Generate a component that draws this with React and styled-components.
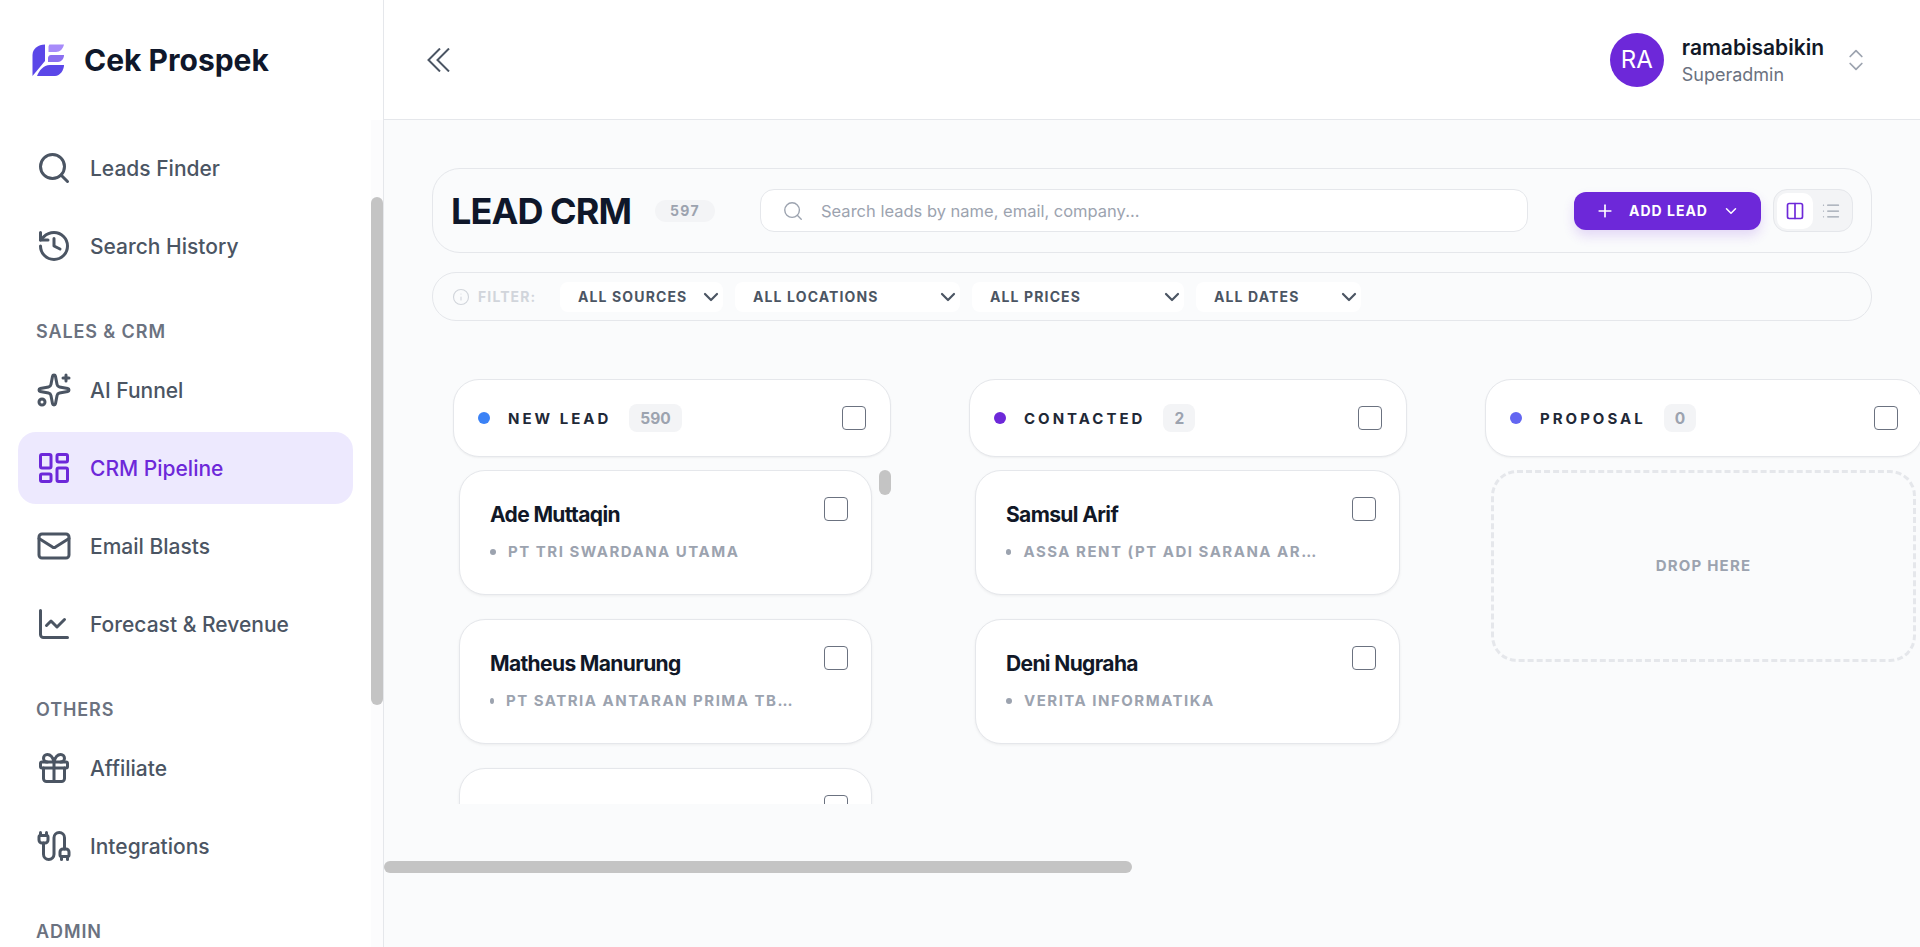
import React, { useLayoutEffect, useRef } from "react";
import styled, { createGlobalStyle } from "styled-components";
import {
  Search,
  History,
  Sparkles,
  LayoutDashboard,
  Mail,
  ChartLine,
  Gift,
  Cable,
  Users,
  Package,
  Settings,
  CreditCard,
  Shield,
  Compass,
  ChevronsUpDown,
  ChevronDown,
  Plus,
  Columns2,
  List,
  Info,
} from "lucide-react";

const GlobalStyle = createGlobalStyle`
  * { box-sizing: border-box; }
  html, body { margin: 0; height: 100%; overflow: hidden; }
  body {
    font-family: Inter, "Noto Sans", sans-serif;
    background: #fafbfc;
    color: #111827;
  }
`;

const Page = styled.div`
  display: flex;
  width: 1920px;
  height: 947px;
  overflow: hidden;
`;

const Sidebar = styled.aside`
  width: 384px;
  flex: none;
  display: flex;
  flex-direction: column;
  background: #fff;
  border-right: 1px solid #e5e7eb;
`;

const Brand = styled.div`
  height: 120px;
  flex: none;
  display: flex;
  align-items: center;
  gap: 20px;
  padding-left: 32px;
`;

const BrandName = styled.span`
  font-size: 30px;
  font-weight: 700;
  color: #0f172a;
`;

const NavWrap = styled.div`
  position: relative;
  flex: 1;
  min-height: 0;
`;

const NavScroll = styled.nav`
  height: 100%;
  overflow-y: scroll;
  padding: 6px 30px 60px 18px;
`;

/* the browser hides real scrollbars in this shot, so the bars are drawn over the content */
const NavTrack = styled.div`
  position: absolute;
  top: 0;
  right: 0;
  bottom: 0;
  width: 12px;
  background: #fcfcfd;
`;

const Thumb = styled.div`
  position: absolute;
  background: #c4c4c4;
  border-radius: 6px;
`;

const NavThumb = styled(Thumb)`
  top: 77px;
  left: 0;
  width: 12px;
  height: 508px;
`;

const NavGroup = styled.div`
  display: flex;
  flex-direction: column;
  gap: 6px;
  margin-bottom: 38px;
`;

const GroupLabel = styled.div`
  height: 24px;
  line-height: 24px;
  padding-left: 18px;
  margin-bottom: 4px;
  font-size: 18px;
  font-weight: 600;
  letter-spacing: 0.05em;
  color: #6b7280;
`;

const NavItem = styled.a`
  height: 72px;
  display: flex;
  align-items: center;
  gap: 18px;
  padding-left: 18px;
  border-radius: 18px;
  font-size: 21px;
  font-weight: 500;
  color: ${(p) => (p.$active ? "#6d28d9" : "#4b5563")};
  background: ${(p) => (p.$active ? "#ede9fe" : "transparent")};

  svg { flex: none; }
`;

const Main = styled.main`
  flex: 1;
  min-width: 0;
  display: flex;
  flex-direction: column;
`;

const TopBar = styled.header`
  height: 120px;
  flex: none;
  display: flex;
  align-items: center;
  justify-content: space-between;
  padding: 0 50px 0 43px;
  background: #fff;
  border-bottom: 1px solid #e5e7eb;
`;

const UserBox = styled.div`
  display: flex;
  align-items: center;
  gap: 18px;
`;

const Avatar = styled.div`
  width: 54px;
  height: 54px;
  border-radius: 50%;
  display: flex;
  align-items: center;
  justify-content: center;
  background: #6d28d9;
  color: #fff;
  font-size: 24px;
`;

const UserText = styled.div`
  display: flex;
  flex-direction: column;
  gap: 4px;
`;

const UserName = styled.span`
  font-size: 21px;
  font-weight: 600;
  color: #111827;
`;

const UserRole = styled.span`
  font-size: 18px;
  color: #6b7280;
`;

const Toolbars = styled.div`
  padding: 48px 48px 0;
  display: flex;
  flex-direction: column;
  gap: 19px;
`;

const TitleBar = styled.div`
  height: 85px;
  display: flex;
  align-items: center;
  padding: 0 18px;
  border: 1px solid #e5e7eb;
  border-radius: 28px;
`;

const Title = styled.h1`
  margin: 0;
  width: 180px;
  flex: none;
  white-space: nowrap;
  font-size: 36px;
  font-weight: 700;
  letter-spacing: -0.025em;
  color: #0f172a;
`;

const TotalBadge = styled.span`
  margin-left: 24px;
  width: 60px;
  height: 22px;
  flex: none;
  display: flex;
  align-items: center;
  justify-content: center;
  border-radius: 11px;
  background: #f3f4f6;
  font-size: 14px;
  font-weight: 700;
  letter-spacing: 0.1em;
  color: #9ca3af;
`;

const SearchBox = styled.label`
  width: 768px;
  height: 43px;
  margin-left: 45px;
  flex: none;
  display: flex;
  align-items: center;
  gap: 15px;
  padding-left: 21px;
  background: #fff;
  border: 1px solid #e5e7eb;
  border-radius: 14px;
  color: #9ca3af;
`;

const SearchInput = styled.input`
  flex: 1;
  border: 0;
  outline: 0;
  background: transparent;
  font: 400 16.5px Inter, sans-serif;
  color: #111827;

  &::placeholder { color: #9ca3af; }
`;

const AddButton = styled.button`
  width: 187px;
  height: 38px;
  margin-left: 46px;
  flex: none;
  display: flex;
  align-items: center;
  justify-content: center;
  gap: 14px;
  border: 0;
  border-radius: 12px;
  background: #6d28d9;
  box-shadow: 0 6px 12px rgba(109, 40, 217, 0.16);
  color: #fff;
  font: 700 14px Inter, sans-serif;
  letter-spacing: 0.07em;
`;

const ViewToggle = styled.div`
  width: 80px;
  height: 43px;
  margin-left: 12px;
  flex: none;
  display: flex;
  align-items: center;
  padding: 3px;
  background: #f3f4f6;
  border: 1px solid #e5e7eb;
  border-radius: 14px;
`;

const ViewOption = styled.span`
  width: 36px;
  height: 36px;
  display: flex;
  align-items: center;
  justify-content: center;
  border-radius: 10px;
  background: ${(p) => (p.$active ? "#fff" : "transparent")};
  color: ${(p) => (p.$active ? "#6d28d9" : "#9ca3af")};
`;

const FilterBar = styled.div`
  height: 49px;
  display: flex;
  align-items: center;
  padding-left: 19px;
  border: 1px solid #e5e7eb;
  border-radius: 24px;
`;

const FilterLabel = styled.span`
  display: flex;
  align-items: center;
  gap: 8px;
  width: 108px;
  flex: none;
  font-size: 14px;
  font-weight: 700;
  letter-spacing: 0.08em;
  color: #d1d5db;
`;

const FilterSelect = styled.div`
  width: ${(p) => p.$w}px;
  height: 30px;
  flex: none;
  margin-right: 12px;
  display: flex;
  align-items: center;
  justify-content: space-between;
  padding-left: 18px;
  background: #fff;
  border-radius: 8px;
  font-size: 14px;
  font-weight: 700;
  letter-spacing: 0.08em;
  color: #4b5563;
`;

const BoardWrap = styled.div`
  position: relative;
  height: 552px;
  margin-bottom: 74px;
  flex: none;
`;

const Board = styled.div`
  height: 100%;
  display: flex;
  gap: 78px;
  padding: 58px 67px 0 69px;
  overflow-x: scroll;
  overflow-y: hidden;
`;

const BoardThumb = styled(Thumb)`
  left: 0;
  bottom: 0;
  width: 748px;
  height: 12px;
`;

const Column = styled.section`
  position: relative;
  width: 438px;
  height: 425px;
  flex: none;
  display: flex;
  flex-direction: column;
`;

const ColumnHead = styled.div`
  height: 78px;
  flex: none;
  display: flex;
  align-items: center;
  padding: 0 24px;
  background: #fff;
  border: 1px solid #e5e7eb;
  border-radius: 26px;
  box-shadow: 0 1px 2px rgba(0, 0, 0, 0.05);
`;

const Dot = styled.span`
  width: 12px;
  height: 12px;
  flex: none;
  border-radius: 50%;
  background: ${(p) => p.$color};
`;

const StageName = styled.span`
  margin-left: 18px;
  font-size: 15px;
  font-weight: 700;
  letter-spacing: 0.2em;
  color: #1f2937;
`;

const StageCount = styled.span`
  margin-left: 18px;
  height: 28px;
  padding: 0 11px;
  display: flex;
  align-items: center;
  border-radius: 8px;
  background: #f3f4f6;
  font-size: 15.5px;
  font-weight: 700;
  color: #9ca3af;
`;

const Check = styled.span`
  width: 24px;
  height: 24px;
  flex: none;
  display: block;
  background: #fff;
  border: 1.5px solid #6b7280;
  border-radius: 4px;
`;

const HeadCheck = styled(Check)`
  margin-left: auto;
`;

const CardList = styled.div`
  flex: 1;
  min-height: 0;
  margin-top: 13px;
  display: flex;
  flex-direction: column;
  gap: 24px;
  padding: 0 ${(p) => (p.$scrolling ? 19 : 7)}px 0 6px;
  overflow-y: scroll;
`;

const ListThumb = styled(Thumb)`
  top: 91px;
  right: 0;
  width: 12px;
  height: 25px;
`;

const Card = styled.article`
  height: 125px;
  flex: none;
  display: flex;
  justify-content: space-between;
  gap: 12px;
  padding: 26px 23px 0 30px;
  background: #fff;
  border: 1px solid #e5e7eb;
  border-radius: 26px;
  box-shadow: 0 1px 3px rgba(0, 0, 0, 0.06);
`;

const CardText = styled.div`
  min-width: 0;
  flex: 1;
  margin-top: 4px;
  display: flex;
  flex-direction: column;
  gap: 14px;
`;

const LeadName = styled.div`
  font-size: 21px;
  line-height: 27px;
  font-weight: 700;
  letter-spacing: -0.03em;
  color: #111827;
`;

const Company = styled.div`
  display: flex;
  align-items: center;
  gap: 12px;
  padding-right: 9px;
  font-size: 15px;
  font-weight: 700;
  letter-spacing: 0.1em;
  color: #9ca3af;

  &::before {
    content: "";
    width: 6px;
    height: 6px;
    border-radius: 50%;
    background: #9ca3af;
    flex-shrink: 1;
  }
`;

const CompanyText = styled.span`
  overflow: hidden;
  white-space: nowrap;
  text-overflow: ellipsis;
`;

const DropZone = styled.div`
  height: 192px;
  flex: none;
  display: flex;
  align-items: center;
  justify-content: center;
  padding-bottom: 2px;
  border: 3px dashed #e5e7eb;
  border-radius: 26px;
  font-size: 15px;
  font-weight: 700;
  letter-spacing: 0.08em;
  color: #9ca3af;
`;

const Logo = () => (
  <svg width="32" height="32" viewBox="0 0 32 32" aria-hidden="true">
    <path d="M13 .5V17L.5 32V11C.5 5 6 .5 13 .5Z" fill="#5b47e8" />
    <path d="M5 32H23C28 32 32 26 32 21H18C11 21 7 27 5 32Z" fill="#5b47e8" />
    <path d="M17.5.5H32C31 5 28 8 24 8H16.5V3C16.5 2 17 .8 17.5.5Z" fill="#a78bfa" />
    <path d="M16 18H26C29 18 32 15 32 11H19C17 11 16 12.5 16 14Z" fill="#8b6ff0" />
  </svg>
);

const CollapseIcon = () => (
  <svg width="24" height="24" viewBox="0 0 24 24" fill="none" stroke="#4b5563" strokeWidth="2" aria-hidden="true">
    <path d="M13 .5 1.5 12 13 23.5" />
    <path d="M22 .5 10.5 12 22 23.5" />
  </svg>
);

const navGroups = [
  {
    label: "MAIN",
    items: [{ label: "Dashboard", icon: Compass }],
  },
  {
    items: [
      { label: "Leads Finder", icon: Search },
      { label: "Search History", icon: History },
    ],
  },
  {
    label: "SALES & CRM",
    items: [
      { label: "AI Funnel", icon: Sparkles },
      { label: "CRM Pipeline", icon: LayoutDashboard, active: true },
      { label: "Email Blasts", icon: Mail },
      { label: "Forecast & Revenue", icon: ChartLine },
    ],
  },
  {
    label: "OTHERS",
    items: [
      { label: "Affiliate", icon: Gift },
      { label: "Integrations", icon: Cable },
    ],
  },
  {
    label: "ADMIN",
    items: [
      { label: "Users", icon: Users },
      { label: "Packages", icon: Package },
      { label: "Billing", icon: CreditCard },
      { label: "Roles", icon: Shield },
      { label: "Settings", icon: Settings },
    ],
  },
];

const filters = [
  { label: "ALL SOURCES", w: 163 },
  { label: "ALL LOCATIONS", w: 225 },
  { label: "ALL PRICES", w: 212 },
  { label: "ALL DATES", w: 165 },
];

const moreLeads = Array.from({ length: 27 }, (_, i) => ({
  name: `Lead ${i + 3}`,
  company: "PT NUSANTARA",
}));

const stages = [
  {
    name: "NEW LEAD",
    color: "#3b82f6",
    count: 590,
    leads: [
      { name: "Ade Muttaqin", company: "PT TRI SWARDANA UTAMA" },
      { name: "Matheus Manurung", company: "PT SATRIA ANTARAN PRIMA TBK CABANG JAKARTA" },
      ...moreLeads,
    ],
  },
  {
    name: "CONTACTED",
    color: "#6d28d9",
    count: 2,
    leads: [
      { name: "Samsul Arif", company: "ASSA RENT (PT ADI SARANA ARMADA)" },
      { name: "Deni Nugraha", company: "VERITA INFORMATIKA" },
    ],
  },
  { name: "PROPOSAL", color: "#6366f1", count: 0, leads: [] },
  { name: "NEGOTIATION", color: "#f59e0b", count: 0, leads: [] },
  { name: "WON", color: "#10b981", count: 5, leads: [] },
  { name: "LOST", color: "#ef4444", count: 0, leads: [] },
];

export default function App() {
  const navRef = useRef(null);

  useLayoutEffect(() => {
    // sidebar sits scrolled down past the first group
    navRef.current.scrollTop = 138;
  }, []);

  return (
    <Page>
      <GlobalStyle />
      <Sidebar>
        <Brand>
          <Logo />
          <BrandName>Cek Prospek</BrandName>
        </Brand>
        <NavWrap>
          <NavScroll ref={navRef}>
            {navGroups.map((group, i) => (
              <NavGroup key={i}>
                {group.label && <GroupLabel>{group.label}</GroupLabel>}
                {group.items.map((item) => (
                  <NavItem key={item.label} $active={item.active}>
                    <item.icon size={36} strokeWidth={2} />
                    {item.label}
                  </NavItem>
                ))}
              </NavGroup>
            ))}
          </NavScroll>
          <NavTrack>
            <NavThumb />
          </NavTrack>
        </NavWrap>
      </Sidebar>
      <Main>
        <TopBar>
          <CollapseIcon />
          <UserBox>
            <Avatar>RA</Avatar>
            <UserText>
              <UserName>ramabisabikin</UserName>
              <UserRole>Superadmin</UserRole>
            </UserText>
            <ChevronsUpDown size={28} strokeWidth={1.5} color="#9ca3af" />
          </UserBox>
        </TopBar>
        <Toolbars>
          <TitleBar>
            <Title>LEAD CRM</Title>
            <TotalBadge>597</TotalBadge>
            <SearchBox>
              <Search size={22} strokeWidth={1.5} />
              <SearchInput placeholder="Search leads by name, email, company..." />
            </SearchBox>
            <AddButton>
              <Plus size={20} />
              ADD LEAD
              <ChevronDown size={18} />
            </AddButton>
            <ViewToggle>
              <ViewOption $active>
                <Columns2 size={20} strokeWidth={2} />
              </ViewOption>
              <ViewOption>
                <List size={20} strokeWidth={1.5} />
              </ViewOption>
            </ViewToggle>
          </TitleBar>
          <FilterBar>
            <FilterLabel>
              <Info size={18} strokeWidth={1.5} />
              FILTER:
            </FilterLabel>
            {filters.map((f) => (
              <FilterSelect key={f.label} $w={f.w}>
                {f.label}
                <ChevronDown size={24} strokeWidth={2.2} />
              </FilterSelect>
            ))}
          </FilterBar>
        </Toolbars>
        <BoardWrap>
          <Board>
            {stages.map((stage) => (
              <Column key={stage.name}>
                <ColumnHead>
                  <Dot $color={stage.color} />
                  <StageName>{stage.name}</StageName>
                  <StageCount>{stage.count}</StageCount>
                  <HeadCheck />
                </ColumnHead>
                <CardList $scrolling={stage.leads.length > 2}>
                  {stage.leads.length === 0 && <DropZone>DROP HERE</DropZone>}
                  {stage.leads.map((lead) => (
                    <Card key={lead.name}>
                      <CardText>
                        <LeadName>{lead.name}</LeadName>
                        <Company>
                          <CompanyText>{lead.company}</CompanyText>
                        </Company>
                      </CardText>
                      <Check />
                    </Card>
                  ))}
                </CardList>
                {stage.leads.length > 2 && <ListThumb />}
              </Column>
            ))}
          </Board>
          <BoardThumb />
        </BoardWrap>
      </Main>
    </Page>
  );
}
